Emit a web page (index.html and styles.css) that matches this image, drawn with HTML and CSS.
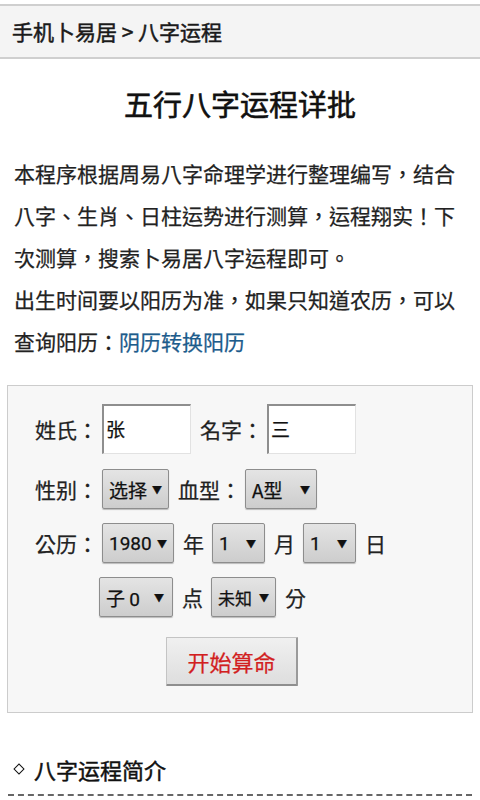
FILE: index.html
```html
<!DOCTYPE html>
<html lang="zh-CN">
<head>
<meta charset="utf-8">
<title>八字运程</title>
<link rel="stylesheet" href="styles.css">
</head>
<body>
<header class="topbar">手机卜易居 &gt; 八字运程</header>

<h1 class="title">五行八字运程详批</h1>

<p class="intro" lang="zh-TW">本程序根据周易八字命理学进行整理编写，结合<br>八字、生肖、日柱运势进行测算，运程翔实！下<br>次测算，搜索卜易居八字运程即可。<br>出生时间要以阳历为准，如果只知道农历，可以<br>查询阳历：<a class="link" href="#">阴历转换阳历</a></p>

<form class="panel" lang="zh-TW">
  <div class="row row-tall">
    <span class="lbl">姓氏：</span><span class="inp">张</span>
    <span class="lbl gap">名字：</span><span class="inp">三</span>
  </div>
  <div class="row">
    <span class="lbl">性别：</span><span class="sel w67"><span class="val">选择</span><span class="arr">▼</span></span>
    <span class="lbl gap">血型：</span><span class="sel w72"><span class="val">A型</span><span class="arr">▼</span></span>
  </div>
  <div class="row">
    <span class="lbl">公历：</span><span class="sel w72"><span class="val num">1980</span><span class="arr">▼</span></span>
    <span class="unit">年</span><span class="sel w53"><span class="val num">1</span><span class="arr">▼</span></span>
    <span class="unit">月</span><span class="sel w53"><span class="val num">1</span><span class="arr">▼</span></span>
    <span class="unit">日</span>
  </div>
  <div class="row row-indent">
    <span class="sel w74"><span class="val">子 <span class="num">0</span></span><span class="arr">▼</span></span>
    <span class="unit">点</span><span class="sel w65"><span class="val small">未知</span><span class="arr">▼</span></span>
    <span class="unit">分</span>
  </div>
  <div class="btnrow">
    <button type="button" class="btn">开始算命</button>
  </div>
</form>

<h2 class="section"><span class="dia"></span>八字运程简介</h2>
</body>
</html>
```

FILE: styles.css
```css
html, body {
  margin: 0;
  padding: 0;
  background: #ffffff;
}
body {
  font-family: "Noto Sans CJK SC", "Noto Sans", sans-serif;
  color: #222;
  width: 480px;
  overflow: hidden;
  -webkit-text-stroke: 0.25px currentColor;
}
.intro, .panel {
  font-family: "Noto Sans CJK TC", "Noto Sans CJK SC", "Noto Sans", sans-serif;
}
.topbar {
  margin-top: 4px;
  height: 55px;
  box-sizing: border-box;
  border-top: 2px solid #cfcfcf;
  border-bottom: 2px solid #cfcfcf;
  background: #f4f4f4;
  padding-left: 12px;
  font-size: 21px;
  line-height: 51px;
  color: #1a1a1a;
  -webkit-text-stroke: 0.5px currentColor;
}
.title {
  margin: 24px 0 0 0;
  font-size: 29px;
  font-weight: normal;
  line-height: 40px;
  text-align: center;
  color: #111;
  -webkit-text-stroke: 0.6px currentColor;
}
.intro {
  margin: 29px 0 0 0;
  padding: 0 8px 0 14px;
  font-size: 21px;
  line-height: 42px;
  color: #222;
}
.link {
  color: #1d5c8c;
  text-decoration: none;
}
.panel {
  margin: 23px 7px 0 7px;
  border: 1px solid #cccccc;
  background: #f7f7f7;
  padding: 18px 0 26px 27px;
  display: flex;
  flex-direction: column;
  gap: 14px;
}
.row {
  display: flex;
  align-items: center;
  height: 40px;
  font-size: 21px;
}
.row-tall {
  height: 50px;
  margin-bottom: 1px;
}
.row-indent {
  padding-left: 64px;
}
.lbl {
  width: 63px;
  margin-right: 4px;
  white-space: nowrap;
  color: #222;
}
.lbl.gap {
  margin-left: 9px;
}
.unit {
  margin: 0 8px 0 9px;
  color: #222;
}
.inp {
  width: 89px;
  height: 50px;
  box-sizing: border-box;
  background: #fff;
  border-top: 2px solid #8e8e8e;
  border-left: 2px solid #8e8e8e;
  border-right: 1px solid #e2e2e2;
  border-bottom: 1px solid #e2e2e2;
  font-size: 19px;
  line-height: 46px;
  padding-left: 2px;
  color: #111;
}
.sel {
  height: 40px;
  box-sizing: border-box;
  display: flex;
  align-items: center;
  justify-content: space-between;
  padding: 0 8px 0 6px;
  border: 1px solid #8d8d8d;
  border-radius: 2px;
  background: linear-gradient(#e4e4e4, #cdcdcd);
  box-shadow: 0 1px 1px rgba(0,0,0,0.25);
  font-size: 19px;
  color: #111;
}
.w53 { width: 53px; }
.w65 { width: 65px; padding-right: 6px; }
.w67 { width: 67px; padding-right: 6px; }
.w72 { width: 72px; padding-right: 6px; }
.w74 { width: 74px; }
.val.small { font-size: 17px; }
.num {
  font-family: "Roboto", "Noto Sans", sans-serif;
  font-size: 19px;
}
.arr {
  font-size: 10px;
  color: #111;
}
.btnrow {
  display: flex;
  padding-left: 131px;
  margin-top: 6px;
}
.btn {
  width: 132px;
  height: 49px;
  box-sizing: border-box;
  border: 1px solid #c4c4c4;
  border-right: 2px solid #9a9a9a;
  border-bottom: 2px solid #8e8e8e;
  border-radius: 1px;
  background: linear-gradient(#f0f0f0, #dedede);
  font-family: "Noto Sans CJK SC", "Noto Sans", sans-serif;
  font-size: 22px;
  color: #d21f1f;
  padding: 0;
  -webkit-text-stroke: 0.25px currentColor;
}
.section {
  margin: 41px 8px 0 8px;
  padding: 0 0 10px 6px;
  font-size: 22px;
  font-weight: normal;
  line-height: 30px;
  color: #111;
  border-bottom: 2px dashed #666;
  display: flex;
  align-items: center;
  -webkit-text-stroke: 0.45px currentColor;
}
.dia {
  width: 6px;
  height: 6px;
  border: 1.5px solid #111;
  transform: rotate(45deg);
  margin: 0 11px 0 1px;
}
```
